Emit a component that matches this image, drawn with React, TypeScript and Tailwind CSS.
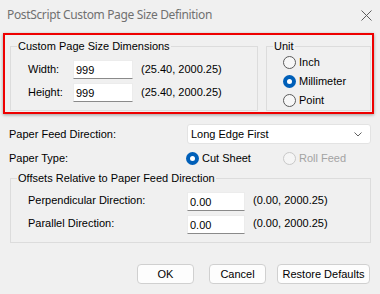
import React from "react";

function Radio({ checked, disabled, label }: { checked?: boolean; disabled?: boolean; label: string }) {
  return (
    <div className="flex items-center h-[19px]">
      {checked ? (
        <div className="w-[13px] h-[13px] rounded-full bg-[#005fb8] flex items-center justify-center shrink-0">
          <div className="w-[5px] h-[5px] rounded-full bg-white" />
        </div>
      ) : (
        <div
          className={
            disabled
              ? "w-[13px] h-[13px] rounded-full border border-[#c8c8c8] bg-[#f5f5f5] shrink-0"
              : "w-[13px] h-[13px] rounded-full border border-[#5a5a5a] bg-[#f7f7f7] shrink-0"
          }
        />
      )}
      <span className={disabled ? "ml-[3px] text-[#a3a3a3]" : "ml-[3px]"}>{label}</span>
    </div>
  );
}

function Field({ value, w }: { value: string; w: string }) {
  return (
    <div className={`${w} h-[19px] bg-white border border-[#ececec] border-b-[#8a8a8a] pl-[2px] flex items-center pt-[2px]`}>
      {value}
    </div>
  );
}

function Group({ title, className, children }: { title: string; className: string; children: React.ReactNode }) {
  return (
    <div className={`relative border border-[#dcdcdc] ${className}`}>
      <span className="absolute -top-[8px] left-[6px] px-[1px] bg-[#f0f0f0] leading-[14px]">{title}</span>
      {children}
    </div>
  );
}

export default function App() {
  return (
    <div className="w-[380px] h-[294px] bg-[#f0f0f0] flex flex-col font-['Liberation_Sans',Arial,sans-serif] text-[11px] text-black leading-[13px] overflow-hidden">
      <div className="h-[33px] shrink-0 flex items-start justify-between pl-[7px] pr-[8px] pt-[7px]">
        <span className="font-['Noto_Sans',sans-serif] text-[12px] tracking-[-0.35px] leading-[16px] text-[#707070]">
          PostScript Custom Page Size Definition
        </span>
        <svg width="11" height="11" viewBox="0 0 11 11" className="mt-[3px]">
          <path d="M0.5 0.5 L10.5 10.5 M10.5 0.5 L0.5 10.5" stroke="#5c5c5c" strokeWidth="1" fill="none" />
        </svg>
      </div>

      <div className="ml-[3px] w-[371px] h-[81px] shrink-0 border-2 border-[#ee0000] shadow-[0_1px_3px_rgba(0,0,0,0.35)] flex pl-[5px] pt-[11px] gap-[8px]">
        <Group title="Custom Page Size Dimensions" className="w-[248px] h-[65px] pt-[13px] pl-[17px] flex flex-col gap-[4px]">
          <div className="flex items-center">
            <span className="w-[45px] -mt-[1px]">Width:</span>
            <Field value="999" w="w-[60px]" />
            <span className="ml-[8px]">(25.40, 2000.25)</span>
          </div>
          <div className="flex items-center">
            <span className="w-[45px] -mt-[1px]">Height:</span>
            <Field value="999" w="w-[60px]" />
            <span className="ml-[8px]">(25.40, 2000.25)</span>
          </div>
        </Group>
        <Group title="Unit" className="w-[105px] h-[65px] pt-[6px] pl-[16px] flex flex-col">
          <Radio label="Inch" />
          <Radio label="Millimeter" checked />
          <Radio label="Point" />
        </Group>
      </div>

      <div className="mt-[10px] flex items-center pl-[9px]">
        <span className="w-[178px]">Paper Feed Direction:</span>
        <div className="w-[184px] h-[20px] bg-white border border-[#e3e3e3] rounded-[3px] flex items-center justify-between pl-[3px] pr-[8px]">
          <span className="pt-[1px]">Long Edge First</span>
          <svg width="8" height="5" viewBox="0 0 8 5">
            <path d="M0.5 0.5 L4 4 L7.5 0.5" stroke="#606060" strokeWidth="1" fill="none" />
          </svg>
        </div>
      </div>

      <div className="mt-[5px] flex items-center pl-[9px]">
        <span className="w-[177px]">Paper Type:</span>
        <div className="w-[97px]">
          <Radio label="Cut Sheet" checked />
        </div>
        <Radio label="Roll Feed" disabled />
      </div>

      <Group title="Offsets Relative to Paper Feed Direction" className="mt-[10px] ml-[10px] w-[361px] h-[65px] shrink-0 pt-[13px] pl-[17px] flex flex-col gap-[4px]">
        <div className="flex items-center">
          <span className="w-[159px] -mt-[3px]">Perpendicular Direction:</span>
          <Field value="0.00" w="w-[58px]" />
          <span className="ml-[8px] -mt-[2px]">(0.00, 2000.25)</span>
        </div>
        <div className="flex items-center">
          <span className="w-[159px] -mt-[3px]">Parallel Direction:</span>
          <Field value="0.00" w="w-[58px]" />
          <span className="ml-[8px] -mt-[2px]">(0.00, 2000.25)</span>
        </div>
      </Group>

      <div className="mt-[21px] flex pl-[137px]">
        <div className="w-[57px] h-[20px] bg-[#fdfdfd] border border-[#d0d0d0] rounded-[4px] flex items-center justify-center">OK</div>
        <div className="ml-[15px] w-[57px] h-[20px] bg-[#fdfdfd] border border-[#d0d0d0] rounded-[4px] flex items-center justify-center">Cancel</div>
        <div className="ml-[11px] w-[93px] h-[20px] bg-[#fdfdfd] border border-[#d0d0d0] rounded-[4px] flex items-center justify-center">Restore Defaults</div>
      </div>
    </div>
  );
}
